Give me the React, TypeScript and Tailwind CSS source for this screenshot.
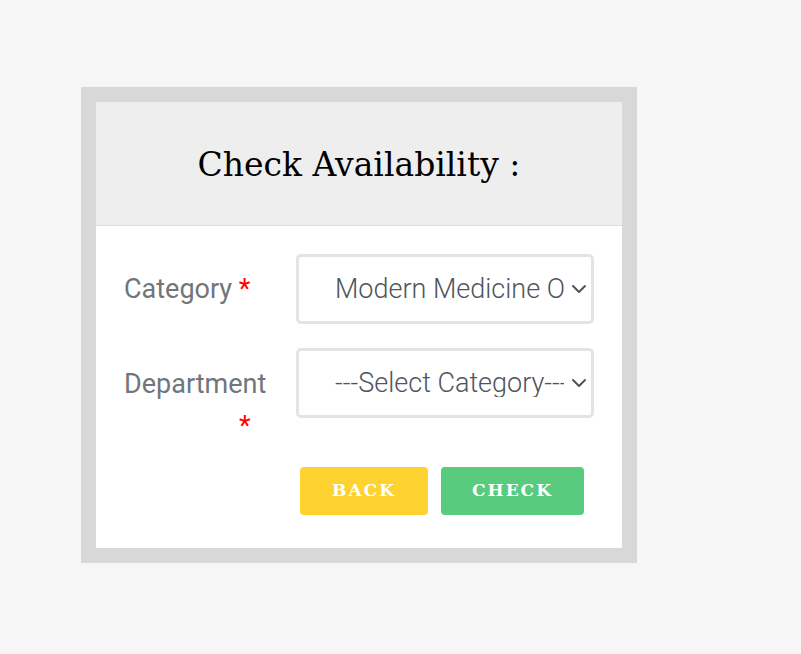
import { ChevronDown } from "lucide-react";

function SelectBox({ value }: { value: string }) {
  return (
    <div className="w-[298px] h-[70px] shrink-0 border-[3px] border-[#e4e4e4] rounded-[5px] bg-white flex items-center pl-[36px] pr-0 overflow-hidden">
      <span className="flex-1 mr-[3px] whitespace-nowrap overflow-hidden text-[27px] font-light text-[#4f555b] leading-none">
        {value}
      </span>
      <ChevronDown size={24} strokeWidth={2} className="text-[#4f555b] shrink-0" />
    </div>
  );
}

export default function App() {
  return (
    <div className="min-h-[654px] bg-[#f6f6f6] pt-[87px] pl-[81px] font-['Roboto',sans-serif]">
      <div className="w-[556px] bg-[#d8d8d8] p-[15px]">
        <div className="bg-white">
          {/* Header */}
          <div className="h-[124px] bg-[#eeeeee] border-b border-[#dcdcdc] flex items-center justify-center">
            <h2 className="font-['DejaVu_Serif',serif] text-[33px] text-black pt-[2px]">
              Check Availability :
            </h2>
          </div>

          {/* Form */}
          <div className="px-[28px] pt-[28px] pb-[33px]">
            <div className="flex items-center">
              <div className="w-[172px] text-[27px] text-[#71767b]">
                Category <span className="text-[#ff0000]">*</span>
              </div>
              <SelectBox value="Modern Medicine OP" />
            </div>

            <div className="flex items-start mt-[24px]">
              <div className="w-[172px] h-[70px] text-[27px] text-[#71767b] pt-[19px] leading-[34px]">
                <div>Department</div>
                <div className="pl-[115px] pt-[8px] text-[#ff0000] leading-[34px]">*</div>
              </div>
              <SelectBox value="---Select Category---" />
            </div>

            <div className="flex gap-[13px] mt-[49px] ml-[176px]">
              <button className="w-[128px] h-[48px] rounded-[4px] bg-[#fed330] text-white font-['DejaVu_Serif',serif] font-bold text-[17px] tracking-[2px]">
                BACK
              </button>
              <button className="w-[143px] h-[48px] rounded-[4px] bg-[#58cb7e] text-white font-['DejaVu_Serif',serif] font-bold text-[17px] tracking-[2px]">
                CHECK
              </button>
            </div>
          </div>
        </div>
      </div>
    </div>
  );
}
